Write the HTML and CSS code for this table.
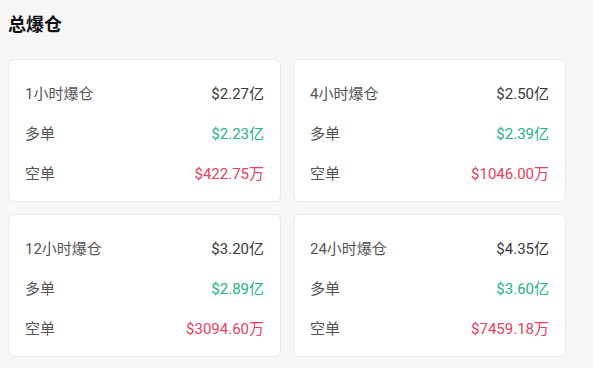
FILE: index.html
```html
<!DOCTYPE html>
<html lang="zh">
<head>
<meta charset="utf-8">
<link rel="stylesheet" href="styles.css">
</head>
<body>
<h2 class="title">总爆仓</h2>
<div class="grid">
  <div class="card">
    <div class="row"><span class="label">1小时爆仓</span><span class="value">$2.27亿</span></div>
    <div class="row"><span class="label">多单</span><span class="value up">$2.23亿</span></div>
    <div class="row"><span class="label">空单</span><span class="value down">$422.75万</span></div>
  </div>
  <div class="card">
    <div class="row"><span class="label">4小时爆仓</span><span class="value">$2.50亿</span></div>
    <div class="row"><span class="label">多单</span><span class="value up">$2.39亿</span></div>
    <div class="row"><span class="label">空单</span><span class="value down">$1046.00万</span></div>
  </div>
  <div class="card">
    <div class="row"><span class="label">12小时爆仓</span><span class="value">$3.20亿</span></div>
    <div class="row"><span class="label">多单</span><span class="value up">$2.89亿</span></div>
    <div class="row"><span class="label">空单</span><span class="value down">$3094.60万</span></div>
  </div>
  <div class="card">
    <div class="row"><span class="label">24小时爆仓</span><span class="value">$4.35亿</span></div>
    <div class="row"><span class="label">多单</span><span class="value up">$3.60亿</span></div>
    <div class="row"><span class="label">空单</span><span class="value down">$7459.18万</span></div>
  </div>
</div>
</body>
</html>
```
FILE: styles.css
```css
html, body {
  margin: 0;
  background: #f7f7f7;
}
body {
  padding: 12px 27px 0 8px;
  font-family: Roboto, "Noto Sans CJK SC", sans-serif;
}
.title {
  margin: 0 0 21px;
  font-size: 18px;
  line-height: 26px;
  font-weight: 700;
  color: #111;
}
.grid {
  display: grid;
  grid-template-columns: 1fr 1fr;
  gap: 12px;
}
.card {
  background: #fff;
  border: 1px solid #e9e9e9;
  border-radius: 6px;
  padding: 12px 16px 9px;
}
.row {
  display: flex;
  justify-content: space-between;
  align-items: center;
  height: 40px;
  font-size: 15px;
}
.label {
  color: #555;
}
.value {
  color: #3a3a3a;
}
.up {
  color: #26b386;
}
.down {
  color: #e8405d;
}
```
